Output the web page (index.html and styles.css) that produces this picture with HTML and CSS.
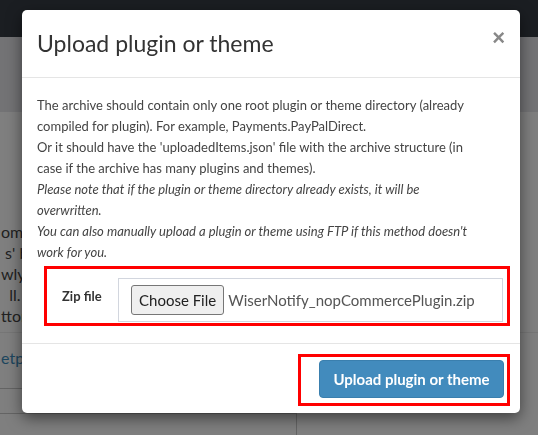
FILE: index.html
```html
<!DOCTYPE html>
<html lang="en">
  <head>
    <meta charset="UTF-8" />
    <title>Upload plugin or theme</title>
    <meta name="viewport" content="width=device-width, initial-scale=1.0" />
    <link rel="stylesheet" href="styles.css">
  </head>
  <body>
    <div class="page">
      <div class="navbar"></div>
      <div class="content-header"></div>
      <div class="content">
        <div class="bg-text">
          <div>omm</div>
          <div>&nbsp;s' b</div>
          <div>wly i</div>
          <div>&nbsp;&nbsp;ll.</div>
          <div>ttor</div>
        </div>
        <div class="bg-link">etp</div>
        <div class="bg-table">
          <div class="bg-row"></div>
          <div class="bg-row"></div>
        </div>
      </div>
    </div>

    <div class="overlay"></div>

    <div class="modal">
      <div class="modal-header">
        <h4 class="modal-title">Upload plugin or theme</h4>
        <button class="close">&times;</button>
      </div>

      <div class="modal-body">
        <p class="info">
          The archive should contain only one root plugin or theme directory (already<br>
          compiled for plugin). For example, Payments.PayPalDirect.<br>
          Or it should have the 'uploadedItems.json' file with the archive structure (in<br>
          case if the archive has many plugins and themes).<br>
          <em>Please note that if the plugin or theme directory already exists, it will be<br>
          overwritten.</em><br>
          <em>You can also manually upload a plugin or theme using FTP if this method doesn't<br>
          work for you.</em>
        </p>

        <div class="form-group marked">
          <label class="control-label">Zip file</label>
          <div class="file-input">
            <button class="file-btn">Choose File</button>
            <span class="file-name">WiserNotify_nopCommercePlugin.zip</span>
          </div>
        </div>
      </div>

      <div class="modal-footer">
        <div class="marked submit-wrap">
          <button class="btn-primary">Upload plugin or theme</button>
        </div>
      </div>
    </div>
  </body>
</html>
```

FILE: styles.css
```css
body {
  margin: 0;
  width: 538px;
  height: 435px;
  overflow: hidden;
  font-family: Lato, "Open Sans", sans-serif;
  background: #ffffff;
}

/* page behind the dialog */
.navbar {
  height: 37px;
  background: #373d45;
}

.content-header {
  height: 75px;
  background: #e6e7eb;
}

.content {
  padding-top: 109px;
}

.bg-text {
  font-size: 16px;
  line-height: 21px;
  color: #444;
  padding-left: 1px;
  padding-bottom: 6px;
  border-bottom: 1px solid #ededed;
}

.bg-link {
  font-size: 16px;
  line-height: 21px;
  color: #3c8dbc;
  padding: 14px 0 20px 1px;
}

.bg-table {
  width: 297px;
  border-top: 1px solid #c8c8c8;
}

.bg-row {
  height: 24px;
  border-right: 1px solid #c8c8c8;
  border-bottom: 1px solid #c8c8c8;
}

.overlay {
  position: fixed;
  inset: 0;
  background: rgba(0, 0, 0, 0.5);
}

/* dialog */
.modal {
  position: absolute;
  left: 22px;
  top: 10px;
  width: 498px;
  background: #ffffff;
  border-radius: 5px;
  box-shadow: 0 5px 15px rgba(0, 0, 0, 0.5);
  color: #333;
}

.modal-header {
  display: flex;
  align-items: flex-start;
  justify-content: space-between;
  padding: 15px;
  border-bottom: 1px solid #e5e5e5;
}

.modal-title {
  margin: 0;
  font-size: 23px;
  font-weight: normal;
  line-height: 37px;
  color: #333;
}

.close {
  background: none;
  border: none;
  padding: 0;
  margin-top: 2px;
  font-family: Arial, sans-serif;
  font-size: 22px;
  font-weight: bold;
  line-height: 22px;
  color: #888;
}

.modal-body {
  padding: 17px 15px 17px;
}

.info {
  margin: 0 0 3px;
  font-size: 13px;
  line-height: 21px;
  color: #444;
  white-space: nowrap;
}

.marked {
  border: 3px solid #ff0000;
}

.form-group {
  display: flex;
  align-items: flex-start;
  margin: 0 -5px 0 7px;
  padding: 9px 4px 1px 15px;
}

.control-label {
  width: 56px;
  padding-top: 8px;
  font-size: 13px;
  font-weight: bold;
  line-height: 20px;
}

.file-input {
  flex: 1;
  display: flex;
  align-items: center;
  gap: 4px;
  height: 42px;
  padding: 0 12px;
  border: 1px solid #d2d6de;
}

.file-btn {
  height: 30px;
  padding: 0 7px;
  white-space: nowrap;
  font-family: Lato, sans-serif;
  font-size: 15px;
  color: #222;
  background: #efefef;
  border: 1px solid #767676;
  border-radius: 3px;
}

.file-name {
  font-size: 15px;
  color: #555;
  white-space: nowrap;
}

.modal-footer {
  display: flex;
  justify-content: flex-end;
  padding: 10px 10px 7px;
  border-top: 1px solid #e5e5e5;
}

.submit-wrap {
  padding: 3px 3px 5px 18px;
}

.btn-primary {
  width: 185px;
  height: 38px;
  font-family: Lato, sans-serif;
  font-size: 15px;
  font-weight: bold;
  color: #ffffff;
  background: #428bbd;
  border: 1px solid #3a7fae;
  border-radius: 4px;
}
```
